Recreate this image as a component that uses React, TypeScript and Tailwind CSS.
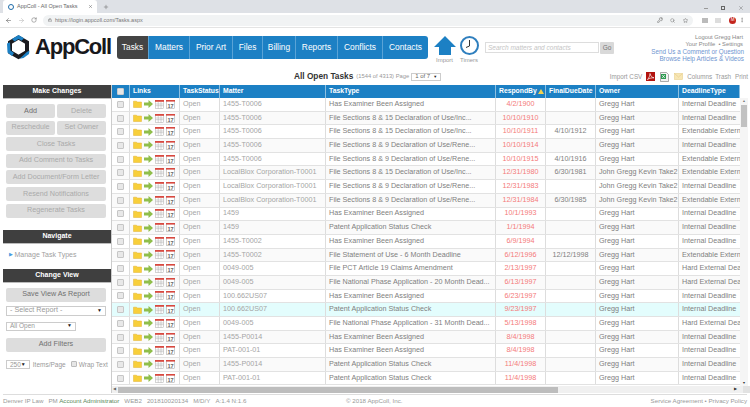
import {
  ArrowLeft,
  ArrowRight,
  KeyRound,
  Lock,
  MoreVertical,
  Plus,
  RotateCw,
  Search,
  Star,
  X,
} from "lucide-react";

const navItems = [
  { label: "Tasks", width: "w-[32px]", active: true },
  { label: "Matters", width: "w-[41px]" },
  { label: "Prior Art", width: "w-[43px]" },
  { label: "Files", width: "w-[30px]" },
  { label: "Billing", width: "w-[33px]" },
  { label: "Reports", width: "w-[42px]" },
  { label: "Conflicts", width: "w-[45px]" },
  { label: "Contacts", width: "w-[45px]" },
];

const gridCols = "grid-cols-[18px_50px_40px_106px_170px_50px_50px_83px_61px]";

const columns = ["Links", "TaskStatus", "Matter", "TaskType", "RespondBy", "FinalDueDate", "Owner", "DeadlineType"];

const EXT = "Extendable External Deadline";
const INT = "Internal Deadline";
const HARD = "Hard External Deadline";
const JOHN = "John Gregg Kevin Take2";
const GREGG = "Gregg Hart";

const rows = [
  ["1455-T0006", "Has Examiner Been Assigned", "4/2/1900", "", GREGG, INT],
  ["1455-T0006", "File Sections 8 & 15 Declaration of Use/Inc...", "10/10/1910", "", GREGG, INT],
  ["1455-T0006", "File Sections 8 & 15 Declaration of Use/Inc...", "10/10/1911", "4/10/1912", GREGG, EXT],
  ["1455-T0006", "File Sections 8 & 9 Declaration of Use/Rene...", "10/10/1914", "", GREGG, INT],
  ["1455-T0006", "File Sections 8 & 9 Declaration of Use/Rene...", "10/10/1915", "4/10/1916", GREGG, EXT],
  ["LocalBlox Corporation-T0001", "File Sections 8 & 15 Declaration of Use/Inc...", "12/31/1980", "6/30/1981", JOHN, EXT],
  ["LocalBlox Corporation-T0001", "File Sections 8 & 9 Declaration of Use/Rene...", "12/31/1983", "", JOHN, INT],
  ["LocalBlox Corporation-T0001", "File Sections 8 & 9 Declaration of Use/Rene...", "12/31/1984", "6/30/1985", JOHN, EXT],
  ["1459", "Has Examiner Been Assigned", "10/1/1993", "", GREGG, INT],
  ["1459", "Patent Application Status Check", "1/1/1994", "", GREGG, INT],
  ["1455-T0002", "Has Examiner Been Assigned", "6/9/1994", "", GREGG, INT],
  ["1455-T0002", "File Statement of Use - 6 Month Deadline", "6/12/1996", "12/12/1998", GREGG, EXT],
  ["0049-005", "File PCT Article 19 Claims Amendment", "2/13/1997", "", GREGG, HARD],
  ["0049-005", "File National Phase Application - 20 Month Dead...", "6/13/1997", "", GREGG, HARD],
  ["100.662US07", "Has Examiner Been Assigned", "6/23/1997", "", GREGG, INT],
  ["100.662US07", "Patent Application Status Check", "9/23/1997", "", GREGG, INT],
  ["0049-005", "File National Phase Application - 31 Month Dead...", "5/13/1998", "", GREGG, HARD],
  ["1455-P0014", "Has Examiner Been Assigned", "8/4/1998", "", GREGG, INT],
  ["PAT-001-01", "Has Examiner Been Assigned", "8/4/1998", "", GREGG, INT],
  ["1455-P0014", "Patent Application Status Check", "11/4/1998", "", GREGG, INT],
  ["PAT-001-01", "Patent Application Status Check", "11/4/1998", "", GREGG, INT],
];

function Logo() {
  return (
    <svg width="27" height="26" viewBox="0 0 27 26" className="shrink-0">
      <path d="M13.5 3.5 22 8.5V18L13.5 23 5 18V8.5Z" fill="none" stroke="#1b1b1f" strokeWidth="4" />
      <path d="M13.5 1 19 4.2 16.5 6.8 13.5 5 9.5 7.4 7 5Z" fill="#1c80c4" />
      <path d="M2 9.5 5 8.2 5.5 16.5 9 19 7 22 2.5 18.5Z" fill="#1c80c4" />
      <path d="M24.5 16.5 21.8 18 17 22.5 14.5 24.8 18.5 24 24 20Z" fill="#1c80c4" />
    </svg>
  );
}

function Folder() {
  return (
    <svg width="9" height="8" viewBox="0 0 9 8">
      <path d="M0.5 1.2H3.5L4.3 2H8.5V7.5H0.5Z" fill="#f8cf3a" stroke="#e0b030" strokeWidth="0.5" />
    </svg>
  );
}

function GreenArrow() {
  return (
    <svg width="9" height="8" viewBox="0 0 9 8">
      <path d="M0 2.5H4.5V0L9 4 4.5 8V5.5H0Z" fill="#8fbe4a" />
    </svg>
  );
}

function GridCalendar() {
  return (
    <svg width="9" height="9" viewBox="0 0 9 9">
      <rect x="0.3" y="0.5" width="8.4" height="8" fill="#fff" stroke="#aaa" strokeWidth="0.5" />
      <rect x="0" y="0" width="9" height="1.8" fill="#d8483f" />
      <path d="M0.5 4H8.5M0.5 5.7H8.5M3.2 2V8.5M6 2V8.5" stroke="#aaa" strokeWidth="0.5" />
    </svg>
  );
}

function DayCalendar() {
  return (
    <svg width="9" height="9" viewBox="0 0 9 9">
      <rect x="0.3" y="0.5" width="8.4" height="8" fill="#fff" stroke="#999" strokeWidth="0.5" />
      <rect x="0" y="0" width="9" height="1.6" fill="#d8483f" />
      <text x="4.5" y="7.8" textAnchor="middle" fontSize="5.6" fontWeight="700" fill="#666" fontFamily="Liberation Sans, sans-serif">
        17
      </text>
    </svg>
  );
}

function Checkbox() {
  return <span className="h-[7px] w-[7px] rounded-[1px] border border-[#c6c6c6] bg-[#e8e8e8]" />;
}

function PanelHeader({ children }: { children: React.ReactNode }) {
  return (
    <div className="flex h-[14px] items-center justify-center border-b border-[#bbb] bg-[#3f3f3f] text-[7px] font-bold text-white">
      {children}
    </div>
  );
}

function SideButton({ children, dark = false, wide = true }: { children: React.ReactNode; dark?: boolean; wide?: boolean }) {
  return (
    <button
      type="button"
      className={`flex h-[14px] items-center justify-center rounded-[2px] bg-[#dddddd] text-[7.2px] ${wide ? "w-full" : "w-[49px]"} ${dark ? "text-[#707070]" : "text-[#aaaaaa]"}`}
    >
      {children}
    </button>
  );
}

function FakeSelect({ label, className }: { label: string; className: string }) {
  return (
    <div className={`flex items-center justify-between border border-[#ccc] bg-white text-[#999] ${className}`}>
      <span>{label}</span>
      <span className="text-[5px] text-[#222]">▼</span>
    </div>
  );
}

function Sidebar() {
  return (
    <aside className="flex w-[109px] shrink-0 flex-col border-r border-[#ccc] text-[#888]">
      <PanelHeader>Make Changes</PanelHeader>
      <div className="flex flex-col gap-[2.6px] pl-[3px] pr-[5px] pt-[5px]">
        <div className="flex justify-between">
          <SideButton dark wide={false}>Add</SideButton>
          <SideButton wide={false}>Delete</SideButton>
        </div>
        <div className="flex justify-between">
          <SideButton wide={false}>Reschedule</SideButton>
          <SideButton wide={false}>Set Owner</SideButton>
        </div>
        <SideButton>Close Tasks</SideButton>
        <SideButton>Add Comment to Tasks</SideButton>
        <SideButton>Add Document/Form Letter</SideButton>
        <SideButton>Resend Notifications</SideButton>
        <SideButton>Regenerate Tasks</SideButton>
      </div>
      <div className="mt-[12px]">
        <PanelHeader>Navigate</PanelHeader>
      </div>
      <div className="flex h-[25px] items-center gap-[1.5px] pb-[2px] pl-[6px] text-[7px] text-[#a0a0a0]">
        <span className="text-[5px] text-[#4a9be0]">▶</span>
        <span>Manage Task Types</span>
      </div>
      <PanelHeader>Change View</PanelHeader>
      <div className="flex flex-col pl-[3px] pr-[5px] pt-[5px]">
        <SideButton dark>Save View As Report</SideButton>
        <FakeSelect label="- Select Report -" className="mt-[4px] h-[10px] w-full px-[3px] text-[7.2px]" />
        <FakeSelect label="All Open" className="mt-[6px] h-[9px] w-[70px] px-[3px] text-[6.5px]" />
        <div className="mt-[7px]">
          <SideButton dark>Add Filters</SideButton>
        </div>
        <div className="mt-[8px] flex items-center gap-[2px] text-[6.5px] text-[#999]">
          <FakeSelect label="250" className="h-[9px] w-[28px] px-[3px]" />
          <span className="ml-[1px]">Items/Page</span>
          <span className="ml-[3px] h-[6px] w-[6px] shrink-0 rounded-[1px] border border-[#bbb] bg-[#e6e6e6]" />
          <span className="whitespace-nowrap">Wrap Text</span>
        </div>
      </div>
    </aside>
  );
}

function TaskTable() {
  return (
    <section className="flex min-w-0 flex-1 flex-col">
      <div className="flex h-[13px]">
        <div className={`grid w-[628px] shrink-0 bg-[#1c80c4] text-[6.8px] font-bold text-white ${gridCols}`}>
          <div className="flex items-center justify-center border-r border-[#8dbfe0]">
            <span className="h-[7px] w-[7px] rounded-[1px] border border-[#ccc] bg-[#e6e6e6]" />
          </div>
          {columns.map((col) => (
            <div key={col} className="flex items-center gap-[1px] whitespace-nowrap border-r border-[#8dbfe0] pl-[3px]">
              {col}
              {col === "RespondBy" ? (
                <svg width="6" height="5" viewBox="0 0 6 5">
                  <path d="M3 0 6 5H0Z" fill="#f3d24f" />
                </svg>
              ) : null}
            </div>
          ))}
        </div>
      </div>
      <div className="flex min-h-0 flex-1">
        <div className="w-[628px] shrink-0 overflow-hidden">
          {rows.map((row, i) => (
            <div
              key={i}
              className={`grid h-[13.7px] items-stretch border-b border-[#e2e2e2] text-[7.2px] text-[#808080] ${gridCols} ${
                row[2] === "9/23/1997" ? "bg-[#e3fdfd]" : i % 2 ? "bg-[#fafafa]" : "bg-white"
              }`}
            >
              <div className="flex items-center justify-center border-r border-[#ddd]">
                <Checkbox />
              </div>
              <div className="flex items-center gap-[2px] border-r border-[#ddd] pl-[3px]">
                <Folder />
                <GreenArrow />
                <GridCalendar />
                <DayCalendar />
              </div>
              <div className="flex items-center border-r border-[#ddd] pl-[3px] text-[#a5a5a5]">Open</div>
              <div className="flex items-center whitespace-nowrap border-r border-[#ddd] pl-[3px] text-[#a5a5a5]">{row[0]}</div>
              <div className="flex items-center whitespace-nowrap border-r border-[#ddd] pl-[3px]">{row[1]}</div>
              <div className="flex items-center justify-center border-r border-[#ddd] text-[#f47a7a]">{row[2]}</div>
              <div className="flex items-center justify-center border-r border-[#ddd]">{row[3]}</div>
              <div className="flex items-center whitespace-nowrap border-r border-[#ddd] pl-[3px]">{row[4]}</div>
              <div className="flex items-center overflow-hidden whitespace-nowrap pl-[3px]">{row[5]}</div>
            </div>
          ))}
        </div>
        <div className="flex w-[8px] shrink-0 flex-col items-center bg-[#f5f5f5] pt-[1px]">
          <span className="text-[3.5px] leading-[5px] text-[#777]">▲</span>
          <div className="mt-[1px] h-[22px] w-[6px] bg-[#c1c1c1]" />
          <div className="flex-1" />
          <span className="text-[3.5px] leading-[5px] text-[#333]">▼</span>
        </div>
      </div>
      <div className="flex h-[7px] items-center bg-[#f0f0f0]">
        <span className="ml-[1px] w-[5px] text-[3.5px] text-[#666]">◀</span>
        <div className="h-[6px] w-[440px] bg-[#bdbdbd]" />
        <div className="flex-1" />
        <span className="w-[9px] text-[3.5px] text-[#333]">▶</span>
        <div className="h-[7px] w-[7px] bg-[#e2e2e2]" />
      </div>
    </section>
  );
}

export default function App() {
  return (
    <div className="flex h-[407px] w-[750px] flex-col overflow-hidden bg-white font-['Liberation_Sans',Arial,sans-serif]">
      {/* browser chrome */}
      <div className="flex h-[13px] items-end bg-[#dee1e6]">
        <div className="ml-[3px] flex h-[13px] w-[94px] items-center rounded-t-[3px] bg-white pl-[5px] pr-[4px] text-[5.5px] text-[#666]">
          <span className="mr-[3px] h-[6px] w-[6px] rounded-full border-[1.5px] border-[#1c6aa8]" />
          <span className="flex-1">AppColl - All Open Tasks</span>
          <X size={5} strokeWidth={2} color="#555" />
        </div>
        <Plus size={6} strokeWidth={2} color="#666" className="mb-[3px] ml-[6px]" />
        <div className="mb-[2px] ml-auto mr-[6px] flex items-center gap-[13px] text-[#888]">
          <span className="h-px w-[4px] bg-[#999]" />
          <span className="h-[4px] w-[4px] border border-[#666]" />
          <X size={6} strokeWidth={1.5} color="#555" />
        </div>
      </div>
      <div className="flex h-[15px] items-center border-b border-[#e4e4e4] bg-white pl-[5px] pr-[5px]">
        <ArrowLeft size={7} color="#666" />
        <ArrowRight size={7} color="#bbb" className="ml-[6px]" />
        <RotateCw size={6} color="#666" className="ml-[6px]" />
        <div className="ml-[6px] flex h-[11px] w-[273px] flex-1 items-center rounded-full bg-[#f1f3f4] pl-[5px] pr-[5px] text-[5.5px] text-[#777]">
          <Lock size={4} color="#555" />
          <span className="ml-[3px]">https://login.appcoll.com/Tasks.aspx</span>
          <span className="flex-1" />
          <KeyRound size={6} color="#666" />
          <Search size={5} color="#666" className="ml-[7px]" />
          <Star size={5} color="#555" className="ml-[8px]" />
        </div>
        <span className="ml-[9px] h-[5px] w-[6px] bg-[#bbb]" />
        <span className="ml-[7px] h-[5px] w-[6px] bg-[#ddd]" />
        <span className="ml-[8px] flex h-[7px] w-[7px] items-center justify-center rounded-full bg-[#c3241d] text-[4.5px] text-white">M</span>
        <MoreVertical size={6} color="#777" className="ml-[3px]" />
      </div>

      {/* app header */}
      <header className="flex h-[40px] shrink-0 items-start">
        <div className="ml-[5px] mt-[6px] flex w-[112px] items-center">
          <Logo />
          <span className="ml-[3px] text-[22px] font-bold leading-none tracking-[-1.2px] text-[#18181c]">AppColl</span>
        </div>
        <nav className="mt-[8px] flex h-[23px] overflow-hidden rounded-[3px] text-[8.4px] text-white">
          {navItems.map((item) => (
            <div
              key={item.label}
              className={`flex items-center justify-center whitespace-nowrap border-r border-[#5aa3d6] last:border-r-0 ${item.width} ${item.active ? "bg-[#444444]" : "bg-[#1c80c4]"}`}
            >
              {item.label}
            </div>
          ))}
        </nav>
        <div className="ml-[5px] mt-[8px] flex w-[23px] flex-col items-center text-[6px] text-[#999]">
          <svg width="22" height="19" viewBox="0 0 22 19">
            <path d="M11 0 22 11H17V19H5V11H0Z" fill="#1c80c4" />
          </svg>
          <span className="mt-[1px]">Import</span>
        </div>
        <div className="ml-[3px] mt-[8px] flex w-[20px] flex-col items-center text-[6px] text-[#999]">
          <svg width="19" height="19" viewBox="0 0 19 19">
            <circle cx="9.5" cy="9.5" r="8.5" fill="#fff" stroke="#2f7fbe" strokeWidth="2" />
            <path d="M9.5 4V10L6 11.5" fill="none" stroke="#333" strokeWidth="1" />
          </svg>
          <span className="mt-[1px]">Timers</span>
        </div>
        <div className="ml-[6px] mt-[14px] flex h-[11px] w-[114px] items-center border border-[#ddd] pl-[2px] text-[6.5px] italic text-[#c5c5c5]">
          Search matters and contacts
        </div>
        <div className="ml-[1px] mt-[13.5px] flex h-[12px] w-[14px] items-center justify-center rounded-[1px] bg-[#d9d9d9] text-[6.5px] text-[#777]">
          Go
        </div>
        <div className="ml-auto mr-[6px] mt-[6px] flex flex-col items-end text-[5.8px] leading-[7px] text-[#888]">
          <span className="mr-[1px]">Logout Gregg Hart</span>
          <span className="mr-[1px]">Your Profile &nbsp;• Settings</span>
          <span className="text-[6.3px] text-[#6f95d0]">Send Us a Comment or Question</span>
          <span className="text-[6.3px] text-[#6f95d0]">Browse Help Articles &amp; Videos</span>
        </div>
      </header>

      {/* title row */}
      <div className="flex h-[17px] shrink-0 items-center">
        <div className="ml-[294px] flex items-center">
          <span className="text-[8.3px] font-bold text-[#333]">All Open Tasks</span>
          <span className="ml-[3px] text-[5.8px] text-[#999]">(1544 of 4313) Page</span>
          <span className="ml-[2px] flex h-[8px] w-[30px] items-center justify-between border border-[#ccc] px-[3px] text-[6px] text-[#666]">
            1 of 7<span className="text-[4px] text-[#222]">▼</span>
          </span>
        </div>
        <div className="ml-auto mr-[2px] flex items-center text-[6.3px] text-[#999]">
          <span>Import CSV</span>
          <svg width="9" height="9" viewBox="0 0 9 9" className="ml-[4px]">
            <rect width="9" height="9" fill="#b3140f" />
            <path d="M1.5 7.5C3 6 4 3.5 4 1.5 4.5 4 6 5.5 8 5.8 6 5.8 3.5 6 1.5 7.5Z" fill="none" stroke="#fff" strokeWidth="0.7" />
          </svg>
          <svg width="9" height="10" viewBox="0 0 9 10" className="ml-[5px]">
            <path d="M0.5 0.5H6.5L8.5 2.5V9.5H0.5Z" fill="#f2f2f2" stroke="#777" strokeWidth="0.6" />
            <rect x="1" y="2" width="5" height="5" fill="#2f9a52" />
            <path d="M2.2 3 4.8 6M4.8 3 2.2 6" stroke="#fff" strokeWidth="0.7" />
          </svg>
          <svg width="9" height="7" viewBox="0 0 9 7" className="ml-[5px]">
            <rect x="0.3" y="0.3" width="8.4" height="6.4" fill="#f7e6b4" stroke="#e8cf8e" strokeWidth="0.5" />
            <path d="M0.5 0.5 4.5 4 8.5 0.5" fill="none" stroke="#e3c47c" strokeWidth="0.5" />
          </svg>
          <span className="ml-[4px]">Columns</span>
          <span className="ml-[3px]">Trash</span>
          <span className="ml-[4px]">Print</span>
        </div>
      </div>

      {/* workspace */}
      <main className="flex min-h-0 flex-1 pl-[3px]">
        <Sidebar />
        <TaskTable />
      </main>

      {/* footer */}
      <footer className="mx-[3px] mt-[1px] flex h-[13px] shrink-0 items-center border-t border-[#ddd] text-[6.2px] text-[#999]">
        <div className="flex w-[343px] gap-[5px] whitespace-nowrap">
          <span>Denver IP Law</span>
          <span>PM <span className="text-[#5c8a5c]">Account Administrator</span></span>
          <span>WEB2</span>
          <span>201810020134</span>
          <span>M/D/Y</span>
          <span>A:1.4 N:1.6</span>
        </div>
        <span>© 2018 AppColl, Inc.</span>
        <span className="ml-auto">Service Agreement • Privacy Policy</span>
      </footer>
    </div>
  );
}
